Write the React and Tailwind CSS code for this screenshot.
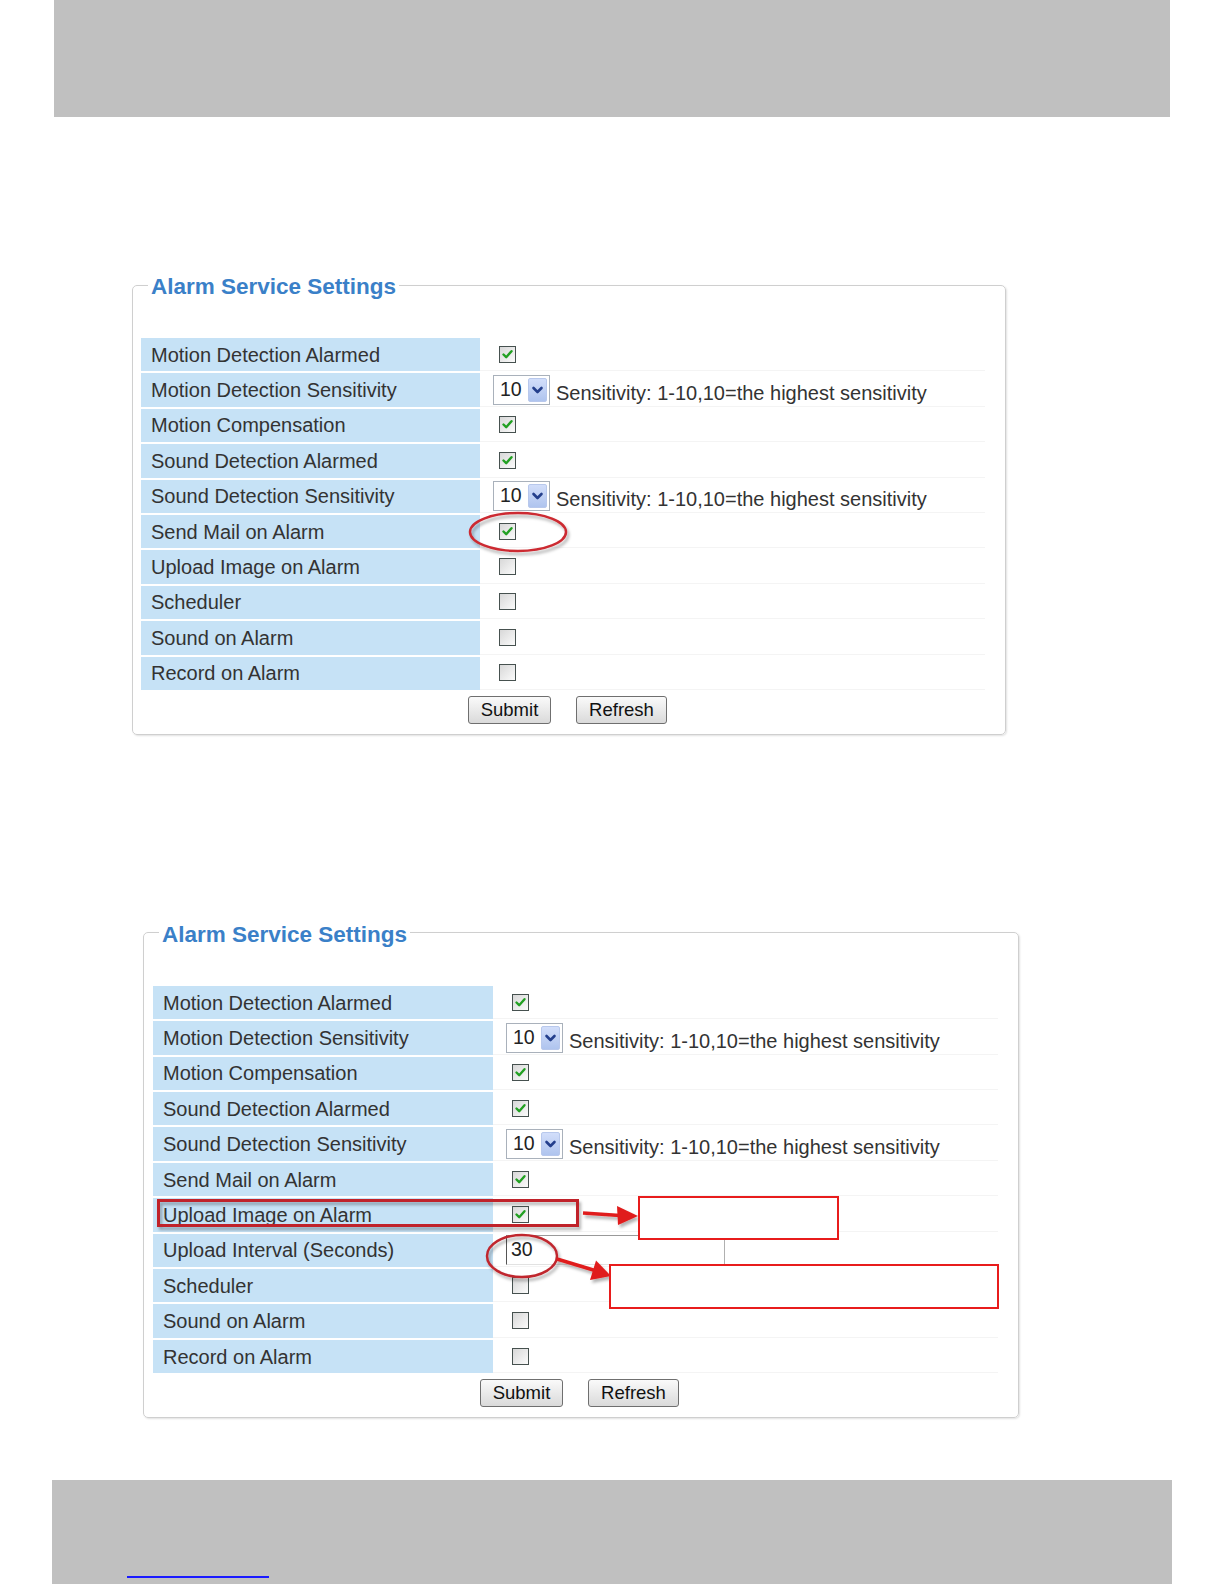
import React from "react";

const CheckBox = ({ checked }) => (
  <div className="w-[17px] h-[17px] border border-[#46514f] bg-gradient-to-br from-[#d8d8d8] to-[#fbfbfb] flex items-center justify-center">
    {checked && (
      <svg width="13" height="13" viewBox="0 0 13 13">
        <path d="M2.5 6.5 L5.2 9.2 L10.5 3.2" fill="none" stroke="#22a022" strokeWidth="2.4" strokeLinecap="round" strokeLinejoin="round" />
      </svg>
    )}
  </div>
);

const Select = () => (
  <div className="w-[57px] h-[30px] border border-[#a9b1bb] bg-white flex items-center justify-between pl-[6px] pr-[2px]">
    <span className="text-[19.5px] leading-none text-[#222]">10</span>
    <div className="w-[19px] h-[24px] rounded-[2px] bg-gradient-to-b from-[#d2defa] to-[#afc4ee] border border-[#b8c8ec] flex items-center justify-center">
      <svg width="13" height="10" viewBox="0 0 13 10">
        <path d="M2.5 3 L6.5 7 L10.5 3" fill="none" stroke="#243f8c" strokeWidth="2.6" strokeLinecap="round" strokeLinejoin="round" />
      </svg>
    </div>
  </div>
);

const Row = ({ row, labelW, valueW }) => (
  <div className="flex h-[33.4px]">
    <div className={`${labelW} h-full bg-[#c6e2f6] pl-[10px] flex items-center text-[20px] text-[#333] whitespace-nowrap`}>
      {row.label}
    </div>
    <div className={`${valueW} h-full flex items-center border-b border-[#f4f4f4]`}>
      {row.type === "check" && (
        <div className="ml-[19px]">
          <CheckBox checked={row.checked} />
        </div>
      )}
      {row.type === "select" && (
        <div className="ml-[13px] flex items-center">
          <Select />
          <span className="ml-[6px] mt-[6px] text-[20px] text-[#333] whitespace-nowrap">
            Sensitivity: 1-10,10=the highest sensitivity
          </span>
        </div>
      )}
      {row.type === "input" && (
        <div className="ml-[13px] w-[219px] h-[30px] border-l border-l-[#555] border-t border-t-[#9a9a9a] border-r border-r-[#b0b0b0] border-b border-b-[#e2e2e2] bg-white flex items-center pl-[4px] text-[19.5px] text-[#222]">
          30
        </div>
      )}
    </div>
  </div>
);

const Panel = ({ rows, outer, inner, labelW, valueW }) => (
  <fieldset className={`${outer} block border border-[#cfcfcf] rounded-[5px] bg-white shadow-[1px_1px_2px_rgba(0,0,0,0.12)]`}>
    <legend className="ml-[15px] px-[3px] pt-[4px] text-[22.5px] leading-[26px] font-bold text-[#3a80c8]">
      Alarm Service Settings
    </legend>
    <div className={`${inner} pt-[38px] pb-[10px]`}>
      <div className="flex flex-col gap-[2px]">
        {rows.map((r) => (
          <Row key={r.label} row={r} labelW={labelW} valueW={valueW} />
        ))}
      </div>
      <div className="flex pl-[327px] gap-[25px] mt-[6px]">
        <button className="w-[83px] h-[28px] border border-[#6f6f6f] rounded-[3px] bg-gradient-to-b from-[#fafafa] to-[#dadada] text-[18.5px] text-[#111] leading-none">
          Submit
        </button>
        <button className="w-[91px] h-[28px] border border-[#6f6f6f] rounded-[3px] bg-gradient-to-b from-[#fafafa] to-[#dadada] text-[18.5px] text-[#111] leading-none">
          Refresh
        </button>
      </div>
    </div>
  </fieldset>
);

const rows1 = [
  { label: "Motion Detection Alarmed", type: "check", checked: true },
  { label: "Motion Detection Sensitivity", type: "select" },
  { label: "Motion Compensation", type: "check", checked: true },
  { label: "Sound Detection Alarmed", type: "check", checked: true },
  { label: "Sound Detection Sensitivity", type: "select" },
  { label: "Send Mail on Alarm", type: "check", checked: true },
  { label: "Upload Image on Alarm", type: "check", checked: false },
  { label: "Scheduler", type: "check", checked: false },
  { label: "Sound on Alarm", type: "check", checked: false },
  { label: "Record on Alarm", type: "check", checked: false },
];

const rows2 = [
  { label: "Motion Detection Alarmed", type: "check", checked: true },
  { label: "Motion Detection Sensitivity", type: "select" },
  { label: "Motion Compensation", type: "check", checked: true },
  { label: "Sound Detection Alarmed", type: "check", checked: true },
  { label: "Sound Detection Sensitivity", type: "select" },
  { label: "Send Mail on Alarm", type: "check", checked: true },
  { label: "Upload Image on Alarm", type: "check", checked: true },
  { label: "Upload Interval (Seconds)", type: "input" },
  { label: "Scheduler", type: "check", checked: false },
  { label: "Sound on Alarm", type: "check", checked: false },
  { label: "Record on Alarm", type: "check", checked: false },
];

export default function App() {
  return (
    <div className="relative w-[1224px] h-[1584px] bg-white overflow-hidden font-['Liberation_Sans',Arial,sans-serif]">
      <div className="ml-[54px] w-[1116px] h-[117px] bg-[#c0c0c0]" />

      <div className="mt-[153px]">
        <Panel rows={rows1} outer="ml-[132px] w-[874px]" inner="pl-[8px]" labelW="w-[339px]" valueW="w-[505px]" />
      </div>

      <div className="mt-[183px]">
        <Panel rows={rows2} outer="ml-[143px] w-[876px]" inner="pl-[9px]" labelW="w-[340px]" valueW="w-[505px]" />
      </div>

      <div className="mt-[62px] ml-[52px] w-[1120px] h-[110px] bg-[#c0c0c0] pt-[96px]">
        <div className="ml-[75px] w-[142px] h-[2px] bg-[#1a1aff]" />
      </div>

      <svg className="absolute left-0 top-0 pointer-events-none" width="1224" height="1584" viewBox="0 0 1224 1584">
        <defs>
          <filter id="sh" x="-20%" y="-20%" width="140%" height="160%">
            <feDropShadow dx="2" dy="3" stdDeviation="1.5" floodColor="#000" floodOpacity="0.3" />
          </filter>
        </defs>
        <ellipse cx="518" cy="532" rx="48" ry="19" fill="none" stroke="#cc2a30" strokeWidth="2.5" filter="url(#sh)" />

        <rect x="158.5" y="1200.5" width="419" height="25" fill="none" stroke="#c0242c" strokeWidth="3" filter="url(#sh)" />
        <g filter="url(#sh)">
          <line x1="583" y1="1213" x2="620" y2="1215.5" stroke="#e01c1c" strokeWidth="3.5" />
          <polygon points="617,1206 638,1216 618,1225" fill="#e01c1c" />
        </g>
        <rect x="639" y="1197" width="199" height="42" fill="#fff" stroke="#e81c1c" strokeWidth="2" />

        <ellipse cx="522" cy="1256" rx="35" ry="21" fill="none" stroke="#c0282e" strokeWidth="2.5" filter="url(#sh)" />
        <g filter="url(#sh)">
          <line x1="557" y1="1259" x2="595" y2="1270.5" stroke="#e01c1c" strokeWidth="3.5" />
          <polygon points="596,1260.5 611,1276 590,1280" fill="#e01c1c" />
        </g>
        <rect x="610" y="1265" width="388" height="43" fill="#fff" stroke="#e81c1c" strokeWidth="2" />
      </svg>
    </div>
  );
}
